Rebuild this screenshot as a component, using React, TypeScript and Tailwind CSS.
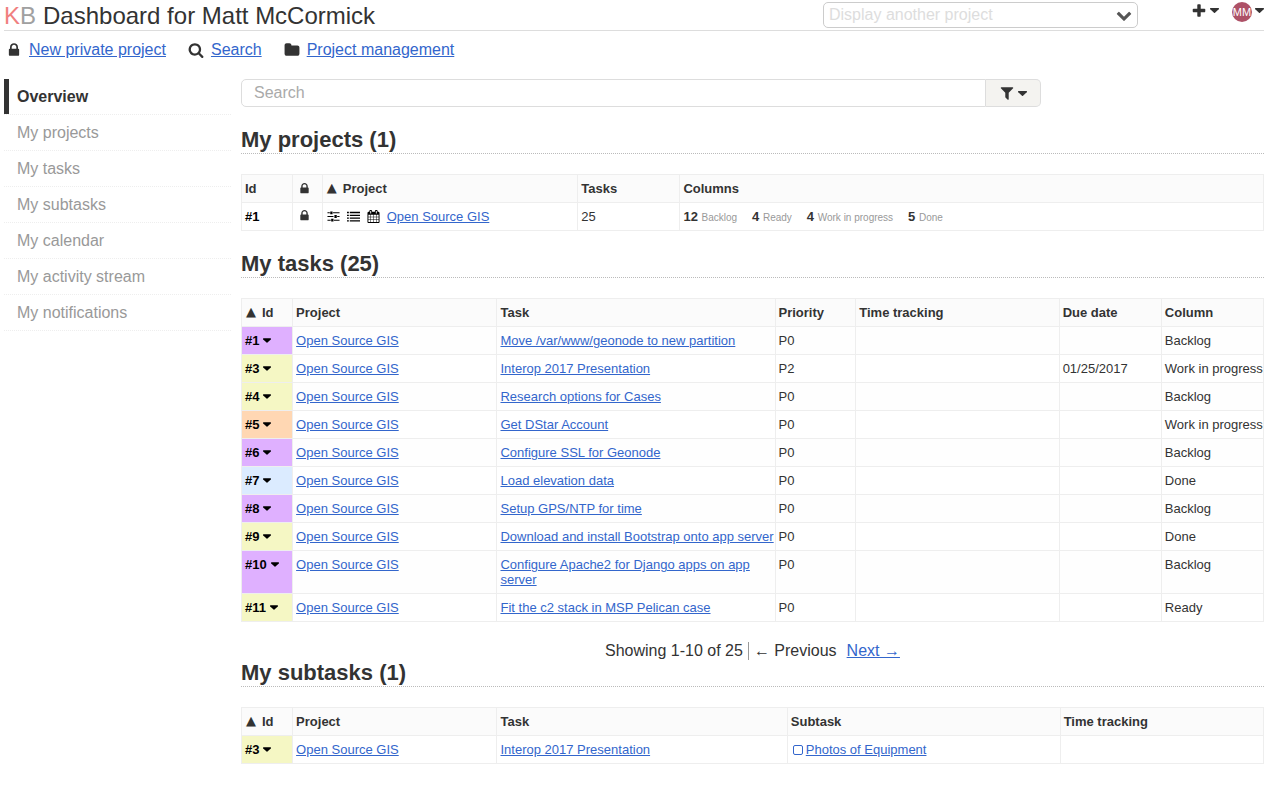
import type { ReactNode } from "react";

const PATHS = {
  lock: "M640 768h512V576q0-106-75-181t-181-75-181 75-75 181v192zm832 96v576q0 40-28 68t-68 28H416q-40 0-68-28t-28-68V864q0-40 28-68t68-28h32V576q0-184 132-316t316-132 316 132 132 316v192h32q40 0 68 28t28 68z",
  search:
    "M1216 832q0-185-131.5-316.5T768 384 451.5 515.5 320 832t131.5 316.5T768 1280t316.5-131.5T1216 832zm512 832q0 52-38 90t-90 38q-54 0-90-38l-343-342q-179 124-399 124-143 0-273.5-55.5t-225-150-150-225T64 832t55.5-273.5 150-225 225-150T768 128t273.5 55.5 225 150 150 225T1472 832q0 220-124 399l343 343q37 37 37 90z",
  folder:
    "M1728 608v704q0 92-66 158t-158 66H288q-92 0-158-66t-66-158V352q0-92 66-158t158-66h320q92 0 158 66t66 158v32h672q92 0 158 66t66 158z",
  plus: "M1600 736v192q0 40-28 68t-68 28h-416v416q0 40-28 68t-68 28H800q-40 0-68-28t-28-68v-416H288q-40 0-68-28t-28-68V736q0-40 28-68t68-28h416V224q0-40 28-68t68-28h192q40 0 68 28t28 68v416h416q40 0 68 28t28 68z",
  filter:
    "M1595 295q17 41-14 70l-493 493v742q0 42-39 59-13 5-25 5-27 0-45-19l-256-256q-19-19-19-45V858L211 365q-31-29-14-70 17-39 59-39h1280q42 0 59 39z",
  chevron:
    "M1683 808l-742 741q-19 19-45 19t-45-19L109 808q-19-19-19-45.5t19-45.5l166-165q19-19 45-19t45 19l531 531 531-531q19-19 45-19t45 19l166 165q19 19 19 45.5t-19 45.5z",
  sliders:
    "M64 320h320v128H64zM832 320h896v128H832zM448 192h320v384H448zM64 832h832v128H64zM1408 832h320v128h-320zM1024 704h320v384h-320zM64 1344h448v128H64zM960 1344h768v128H960zM576 1216h320v384H576z",
  list: "M0 256h256v192H0zM384 256h1408v192H384zM0 640h256v192H0zM384 640h1408v192H384zM0 1024h256v192H0zM384 1024h1408v192H384zM0 1408h256v192H0zM384 1408h1408v192H384z",
  calendar:
    "M192 1664h288v-288H192v288zm352 0h320v-288H544v288zm-352-352h288V992H192v320zm352 0h320V992H544v320zM192 928h288V640H192v288zm736 736h320v-288H928v288zM544 928h320V640H544v288zm768 736h288v-288h-288v288zm-384-352h320V992H928v320zM576 448V160q0-13-9.500-22.500T544 128h-64q-13 0-22.500 9.500T448 160v288q0 13 9.500 22.500T480 480h64q13 0 22.500-9.500T576 448zm736 864h288V992h-288v320zM928 928h320V640H928v288zm384 0h288V640h-288v288zm32-480V160q0-13-9.500-22.500T1312 128h-64q-13 0-22.500 9.500T1216 160v288q0 13 9.500 22.500t22.500 9.500h64q13 0 22.500-9.500T1344 448zm384-64v1280q0 52-38 90t-90 38H192q-52 0-90-38t-38-90V384q0-52 38-90t90-38h128v-96q0-66 47-113T480 0h64q66 0 113 47t47 113v96h384v-96q0-66 47-113t113-47h64q66 0 113 47t47 113v96h128q52 0 90 38t38 90z",
};

function Icon({ name, className = "size-4" }: { name: keyof typeof PATHS; className?: string }) {
  return (
    <svg viewBox="0 0 1792 1792" fill="currentColor" aria-hidden="true" className={`shrink-0 ${className}`}>
      <path d={PATHS[name]} />
    </svg>
  );
}

function Caret({ className = "w-[9px]" }: { className?: string }) {
  return (
    <svg viewBox="0 0 18 10" fill="currentColor" aria-hidden="true" className={`h-[5px] shrink-0 ${className}`}>
      <path d="M1 0h16q1 0 1 1t-.5 1.500L10 9.500q-1 .8-2 0L.5 2.500Q0 2 0 1t1-1z" />
    </svg>
  );
}

function A({ children }: { children: ReactNode }) {
  return (
    <a href="#" className="text-[#3366cc] underline">
      {children}
    </a>
  );
}

function Heading({ children }: { children: ReactNode }) {
  return (
    <h2 className="mb-5 border-b border-dotted border-[#bbb] text-[22px] leading-[26px] font-bold">{children}</h2>
  );
}

function Th({ children, className = "" }: { children?: ReactNode; className?: string }) {
  return (
    <th className={`border border-[#eee] bg-[#fbfbfb] px-[3px] py-[6px] text-left font-bold ${className}`}>
      {children}
    </th>
  );
}

function Td({ children, className = "px-[3px]" }: { children?: ReactNode; className?: string }) {
  return <td className={`border border-[#eee] py-[6px] align-top ${className}`}>{children}</td>;
}

function Sorted({ children }: { children: ReactNode }) {
  return (
    <span className="flex gap-[6px] pl-px">
      <span className="font-['DejaVu_Sans'] leading-[13px] font-normal">▲</span>
      {children}
    </span>
  );
}

function IdMenu({ id }: { id: number }) {
  return (
    <button type="button" className="flex items-center gap-1 font-bold text-black">
      #{id}
      <Caret className="w-[8px]" />
    </button>
  );
}

const TABLE = "w-full table-fixed border-collapse text-[13px] leading-[15px]";
const PURPLE = "bg-[#dfb0ff]";
const YELLOW = "bg-[#f5f7c4]";
const ORANGE = "bg-[#ffd7b3]";
const BLUE = "bg-[#dbebff]";

const tasks = [
  { id: 1, color: PURPLE, title: "Move /var/www/geonode to new partition", priority: "P0", due: "", column: "Backlog" },
  { id: 3, color: YELLOW, title: "Interop 2017 Presentation", priority: "P2", due: "01/25/2017", column: "Work in progress" },
  { id: 4, color: YELLOW, title: "Research options for Cases", priority: "P0", due: "", column: "Backlog" },
  { id: 5, color: ORANGE, title: "Get DStar Account", priority: "P0", due: "", column: "Work in progress" },
  { id: 6, color: PURPLE, title: "Configure SSL for Geonode", priority: "P0", due: "", column: "Backlog" },
  { id: 7, color: BLUE, title: "Load elevation data", priority: "P0", due: "", column: "Done" },
  { id: 8, color: PURPLE, title: "Setup GPS/NTP for time", priority: "P0", due: "", column: "Backlog" },
  { id: 9, color: YELLOW, title: "Download and install Bootstrap onto app server", priority: "P0", due: "", column: "Done" },
  { id: 10, color: PURPLE, title: "Configure Apache2 for Django apps on app server", priority: "P0", due: "", column: "Backlog" },
  { id: 11, color: YELLOW, title: "Fit the c2 stack in MSP Pelican case", priority: "P0", due: "", column: "Ready" },
];

const columns = [
  { count: 12, name: "Backlog" },
  { count: 4, name: "Ready" },
  { count: 4, name: "Work in progress" },
  { count: 5, name: "Done" },
];

const menu = ["My projects", "My tasks", "My subtasks", "My calendar", "My activity stream", "My notifications"];

export default function App() {
  return (
    <div className="mr-px ml-1 bg-white pb-8 font-['Liberation_Sans',Arial,sans-serif] text-base text-[#333]">
      <header className="flex items-start border-b border-[#ddd]">
        <h1 className="flex flex-1 gap-[7px] pt-px text-2xl leading-[29px]">
          <a href="#" aria-label="KB home">
            <span className="text-[#f08080]">K</span>
            <span className="text-[#a0a0a0]">B</span>
          </a>
          Dashboard for Matt McCormick
        </h1>
        <div className="relative mt-[2px] w-[315px]">
          <select
            aria-label="Display another project"
            className="block h-[26px] w-full appearance-none rounded-[5px] border border-[#ccc] bg-white pr-8 pl-[5px] text-base leading-6 text-[#ddd]"
          >
            <option>Display another project</option>
          </select>
          <Icon name="chevron" className="pointer-events-none absolute top-[5px] right-[6px] size-4 text-[#555]" />
        </div>
        <div className="flex w-[126px] items-start justify-end gap-[13px] pt-[2px]">
          <button type="button" aria-label="Add" className="flex h-[17px] items-center gap-[3px]">
            <Icon name="plus" />
            <Caret />
          </button>
          <button type="button" aria-label="User menu" className="flex items-center gap-[3px]">
            <span className="flex size-5 items-center justify-center rounded-full bg-[#ad5167] text-[11px] leading-none text-white">
              MM
            </span>
            <Caret className="mb-1 w-[9px]" />
          </button>
        </div>
      </header>

      <nav className="mt-[9px] flex gap-[22px] pl-[2px] leading-5">
        <span className="flex items-center gap-[7px]">
          <Icon name="lock" />
          <A>New private project</A>
        </span>
        <span className="flex items-center gap-[7px]">
          <Icon name="search" />
          <A>Search</A>
        </span>
        <span className="flex items-center gap-[7px]">
          <Icon name="folder" />
          <A>Project management</A>
        </span>
      </nav>

      <div className="mt-[19px] flex gap-[10px]">
        <aside className="w-[227px] shrink-0">
          <ul className="leading-[35px]">
            <li className="border-b border-dotted border-[#eee]">
              <a href="#" className="block border-l-5 border-[#333] pl-2 font-bold">
                Overview
              </a>
            </li>
            {menu.map((item) => (
              <li key={item} className="border-b border-dotted border-[#eee]">
                <a href="#" className="block pl-[13px] text-[#999]">
                  {item}
                </a>
              </li>
            ))}
          </ul>
        </aside>

        <main className="min-w-0 flex-1">
          <form className="mb-5 flex max-w-[800px]">
            <input
              type="text"
              aria-label="Search"
              placeholder="Search"
              className="h-7 min-w-0 flex-1 rounded-l-[5px] border border-[#ddd] px-3 text-base placeholder:text-[#aaa]"
            />
            <button
              type="button"
              aria-label="Filters"
              className="flex h-7 w-[55px] items-center justify-center gap-[3px] rounded-r-[5px] border border-l-0 border-[#ddd] bg-[#f4f3f0]"
            >
              <Icon name="filter" />
              <Caret />
            </button>
          </form>

          <Heading>My projects (1)</Heading>
          <table className={`mb-5 ${TABLE}`}>
            <thead>
              <tr>
                <Th className="w-[5%]">Id</Th>
                <Th className="w-[2.9%]">
                  <Icon name="lock" className="ml-[2px] size-[13px]" />
                </Th>
                <Th className="w-[25%]">
                  <Sorted>Project</Sorted>
                </Th>
                <Th className="w-[10%]">Tasks</Th>
                <Th>Columns</Th>
              </tr>
            </thead>
            <tbody>
              <tr>
                <Td className="px-[3px] font-bold text-black">#1</Td>
                <Td>
                  <Icon name="lock" className="ml-[2px] size-[13px]" />
                </Td>
                <Td>
                  <div className="flex items-center gap-[7px] pl-px text-black">
                    <Icon name="sliders" className="size-[13px]" />
                    <Icon name="list" className="size-[13px]" />
                    <Icon name="calendar" className="size-[13px]" />
                    <A>Open Source GIS</A>
                  </div>
                </Td>
                <Td>25</Td>
                <Td>
                  <div className="flex gap-[15px]">
                    {columns.map((c) => (
                      <span key={c.name}>
                        <strong>{c.count}</strong>{" "}
                        <span className="text-[10px] leading-none text-[#999]">{c.name}</span>
                      </span>
                    ))}
                  </div>
                </Td>
              </tr>
            </tbody>
          </table>

          <Heading>My tasks (25)</Heading>
          <table className={TABLE}>
            <thead>
              <tr>
                <Th className="w-[5%]">
                  <Sorted>Id</Sorted>
                </Th>
                <Th className="w-[20%]">Project</Th>
                <Th>Task</Th>
                <Th className="w-[7.9%]">Priority</Th>
                <Th className="w-[19.9%]">Time tracking</Th>
                <Th className="w-[10%]">Due date</Th>
                <Th className="w-[10%]">Column</Th>
              </tr>
            </thead>
            <tbody>
              {tasks.map((t) => (
                <tr key={t.id} className="odd:bg-[#fefefe]">
                  <Td className={`px-[3px] ${t.color}`}>
                    <IdMenu id={t.id} />
                  </Td>
                  <Td>
                    <A>Open Source GIS</A>
                  </Td>
                  <Td className="pl-[3px]">
                    <A>{t.title}</A>
                  </Td>
                  <Td>{t.priority}</Td>
                  <Td />
                  <Td>{t.due}</Td>
                  <Td className="pl-[3px] whitespace-nowrap">{t.column}</Td>
                </tr>
              ))}
            </tbody>
          </table>

          <div className="mt-5 flex items-center justify-center leading-[18px]">
            <span className="mr-[5px] border-r border-[#999] pr-[5px]">Showing 1-10 of 25</span>
            <span className="mr-[10px]">← Previous</span>
            <A>Next →</A>
          </div>

          <Heading>My subtasks (1)</Heading>
          <table className={TABLE}>
            <thead>
              <tr>
                <Th className="w-[5%]">
                  <Sorted>Id</Sorted>
                </Th>
                <Th className="w-[20%]">Project</Th>
                <Th>Task</Th>
                <Th className="w-[26.7%]">Subtask</Th>
                <Th className="w-[19.9%]">Time tracking</Th>
              </tr>
            </thead>
            <tbody>
              <tr>
                <Td className={`px-[3px] ${YELLOW}`}>
                  <IdMenu id={3} />
                </Td>
                <Td>
                  <A>Open Source GIS</A>
                </Td>
                <Td>
                  <A>Interop 2017 Presentation</A>
                </Td>
                <Td>
                  <div className="flex items-center gap-[3px] pl-[2px]">
                    <input
                      type="checkbox"
                      aria-label="Photos of Equipment"
                      className="size-[10px] appearance-none rounded-[2px] border border-[#3366cc]"
                    />
                    <A>Photos of Equipment</A>
                  </div>
                </Td>
                <Td />
              </tr>
            </tbody>
          </table>
        </main>
      </div>
    </div>
  );
}
